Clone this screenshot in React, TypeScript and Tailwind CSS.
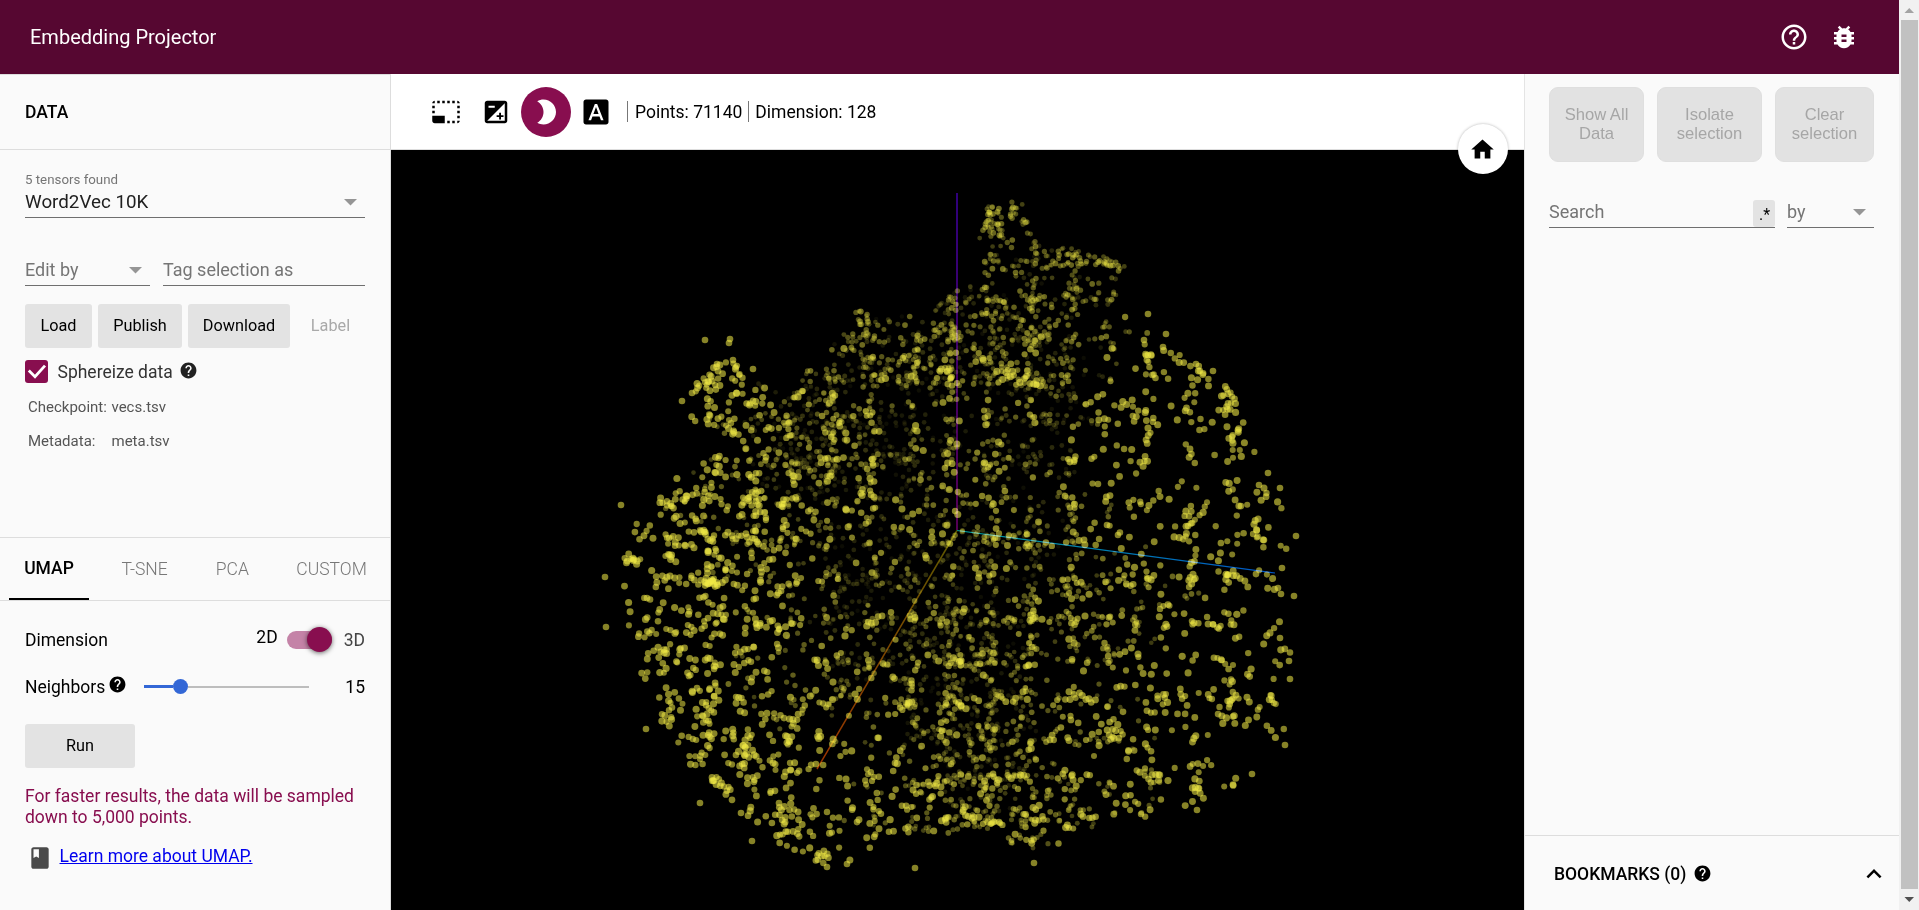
import React, { useMemo } from 'react';
import {
  MdBrightness2,
  MdBugReport,
  MdClass,
  MdExpandLess,
  MdExposure,
  MdFontDownload,
  MdHelp,
  MdHelpOutline,
  MdHome,
  MdPhotoSizeSelectSmall,
} from 'react-icons/md';

/* ---------- point cloud ---------- */

const CELL = 40;
const COLUMNS = 18;
const ORIGIN_X = 590;
const ORIGIN_Y = 180;

// Points per cell (base 36) for each depth layer, nearest layer first.
const NEAR = [
  '000000000000000000',
  '000000000000000000',
  '000000000000000000',
  '001200000000011000',
  '002c1013567315e600',
  '008m862253c54c6i30',
  '005cc6844440a94c70',
  '02ce8a924532385542',
  '0amigc945456486ac2',
  '4cqie3422343468aa2',
  '0ciee643252686e6a3',
  '0eeec3433546668863',
  '0cic86353546586g34',
  '08gcie465646eei894',
  '01ceee865666346420',
  '001de87ccce59c5c00',
  '0002ei862353320000',
];
const MIDDLE = [
  '0000000003o2000000',
  '0000000012kga20000',
  '000000002akomb0000',
  '000000c8gkqlc30000',
  '000004pppfkk320000',
  '00004fa6a46a300000',
  '00058fc56663000000',
  '0028ca8886c6100000',
  '0066aa445aef500000',
  '000488448aa8840000',
  '00005686eeeeea6000',
  '00000888cicee80000',
  '000364c8ekg8500000',
  '00003325iki8330000',
  '00000003ekk8430000',
  '00000034ammia60000',
  '0000000084c5000000',
];
const FAR = [
  '000000000000000000',
  '000000000022000000',
  '000000000688400000',
  '000000068kka500000',
  '000000afkkkp200000',
  '00006pfka58p800000',
  '0000azuuk6ck000000',
  '0000akfka558000000',
  '0000008caaa8000000',
  '000004kgci85000000',
  '000000zfck80000000',
  '0000036cpk80000000',
  '000000a5ksf0000000',
  '00000000fpe0000000',
  '000000008ff0000000',
  '000000000680000000',
];

const OUTLINE: [number, number][] = [
  [680, 400], [690, 385], [708, 362], [738, 362], [752, 380], [768, 385], [785, 400], [800, 385],
  [808, 365], [830, 350], [845, 330], [845, 295], [858, 297], [878, 320], [920, 312], [945, 298],
  [965, 285], [975, 250], [982, 222], [985, 203], [1005, 203], [1012, 200], [1024, 201], [1034, 232],
  [1062, 245], [1090, 253], [1127, 262], [1120, 300], [1150, 330], [1175, 350], [1195, 365], [1215, 370],
  [1235, 395], [1250, 435], [1265, 470], [1282, 490], [1297, 540], [1290, 600], [1292, 670], [1288, 740],
  [1245, 760], [1230, 795], [1170, 815], [1120, 825], [1080, 840], [1040, 850], [1000, 842], [950, 835],
  [900, 845], [865, 860], [830, 866], [810, 860], [775, 842], [750, 820], [725, 795], [690, 765],
  [672, 740], [650, 700], [640, 680], [630, 650], [625, 600], [622, 545], [650, 505], [660, 480],
  [720, 455], [715, 435], [690, 420],
];

const OUTLIERS: [number, number][] = [
  [621, 505], [605, 577], [606, 627], [646, 729], [700, 803], [741, 813], [752, 841], [705, 340], [730, 339],
  [729, 343], [733, 360], [717, 364], [753, 369], [692, 393], [682, 401], [1148, 314], [1144, 340], [1166, 334],
  [1163, 347], [1148, 355], [1213, 371], [1196, 364], [1268, 473], [1280, 488], [1259, 485], [1296, 536],
  [1282, 568], [1294, 596], [1278, 588], [1281, 594], [1252, 774], [1197, 810], [1290, 679], [1285, 745],
  [1289, 661], [1280, 638], [827, 867], [847, 864], [915, 868], [1034, 863], [1065, 496], [1107, 525],
];

function inOutline(x: number, y: number) {
  let inside = false;
  for (let i = 0, j = OUTLINE.length - 1; i < OUTLINE.length; j = i++) {
    const [xi, yi] = OUTLINE[i];
    const [xj, yj] = OUTLINE[j];
    if (yi > y !== yj > y && x < ((xj - xi) * (y - yi)) / (yj - yi) + xi) inside = !inside;
  }
  return inside;
}

type Dot = { x: number; y: number; r: number; o: number };
type Layer = { rows: string[]; scale: number; r: [number, number]; o: [number, number]; clump: number };

const LAYERS: Layer[] = [
  { rows: FAR, scale: 1.25, r: [2.2, 2.5], o: [0.05, 0.22], clump: 0.1 },
  { rows: MIDDLE, scale: 1.3, r: [2.3, 2.9], o: [0.24, 0.46], clump: 0.2 },
  { rows: NEAR, scale: 1.22, r: [3, 3.6], o: [0.53, 0.58], clump: 0.28 },
];

function buildCloud(): Dot[] {
  let seed = 90411;
  const rnd = () => {
    seed = (seed * 1664525 + 1013904223) % 4294967296;
    return seed / 4294967296;
  };
  const dots: Dot[] = [];
  LAYERS.forEach(({ rows, scale, r, o, clump }) => {
    rows.forEach((row, ry) => {
      for (let cx = 0; cx < COLUMNS; cx++) {
        const n = Math.round(parseInt(row[cx], 36) * scale);
        let px = 0;
        let py = 0;
        for (let k = 0; k < n; k++) {
          let x = 0;
          let y = 0;
          let ok = false;
          for (let t = 0; t < 12 && !ok; t++) {
            if (k > 0 && rnd() < clump) {
              const a = rnd() * Math.PI * 2;
              const d = 3 + rnd() * 5;
              x = px + Math.cos(a) * d;
              y = py + Math.sin(a) * d;
            } else {
              x = ORIGIN_X + (cx - 0.15 + rnd() * 1.3) * CELL;
              y = ORIGIN_Y + (ry - 0.15 + rnd() * 1.3) * CELL;
            }
            ok = inOutline(x, y);
          }
          if (!ok) continue;
          px = x;
          py = y;
          const z = rnd();
          dots.push({ x, y, r: r[0] + (r[1] - r[0]) * z, o: o[0] + (o[1] - o[0]) * z });
        }
      }
    });
  });
  OUTLIERS.forEach(([x, y]) => dots.push({ x, y, r: 3.3, o: 0.56 }));
  return dots;
}

function Cloud() {
  const dots = useMemo(buildCloud, []);
  return (
    <svg className="block h-full w-full bg-black" viewBox="391 150 1133 760">
      <defs>
        <linearGradient id="axis-up" gradientUnits="userSpaceOnUse" x1="957" y1="193" x2="957" y2="530">
          <stop offset="0" stopColor="#2f007c" />
          <stop offset="1" stopColor="#540054" />
        </linearGradient>
        <linearGradient id="axis-right" gradientUnits="userSpaceOnUse" x1="957" y1="530" x2="1275" y2="573">
          <stop offset="0" stopColor="#00a09c" />
          <stop offset="1" stopColor="#0056c8" />
        </linearGradient>
        <linearGradient id="axis-down" gradientUnits="userSpaceOnUse" x1="957" y1="530" x2="817" y2="769">
          <stop offset="0" stopColor="#5c5a00" />
          <stop offset="1" stopColor="#9c3400" />
        </linearGradient>
      </defs>
      <g fill="#f0e945">
        {dots.map((d, i) => (
          <circle key={i} cx={d.x.toFixed(1)} cy={d.y.toFixed(1)} r={d.r.toFixed(2)} fillOpacity={d.o.toFixed(2)} />
        ))}
      </g>
      <g className="mix-blend-screen">
        <path d="M956 193h2v337h-2z" fill="url(#axis-up)" />
        <line x1="957" y1="530.5" x2="1275" y2="573" stroke="url(#axis-right)" strokeWidth="1.2" />
        <line x1="957" y1="530.5" x2="817" y2="769" stroke="url(#axis-down)" strokeWidth="1.5" />
      </g>
    </svg>
  );
}

/* ---------- small parts ---------- */

function Caret() {
  return (
    <svg className="mr-[8.5px] mb-[2px] block h-[7px] w-[13px]" viewBox="0 0 13 7">
      <path d="M0 0h13L6.5 6.6z" fill="#959595" />
    </svg>
  );
}

function GreyButton({ className, children }: { className: string; children: React.ReactNode }) {
  return (
    <button className={`h-[44px] rounded-[3px] bg-[#e3e3e3] text-[16.25px] text-black ${className}`}>
      {children}
    </button>
  );
}

function PanelButton({ className, children }: { className: string; children: React.ReactNode }) {
  return (
    <button
      className={`h-[75px] rounded-[9px] border border-[#dfdfdf] bg-[#e2e2e2] pb-[2px] font-['Liberation_Sans',Arial,sans-serif] text-[16.6px] leading-[19px] text-[#a6a6a6] ${className}`}
    >
      {children}
    </button>
  );
}

function DataPanel() {
  return (
    <section className="flex h-[388px] flex-col border-b border-[#dddddd] pr-[25px] pl-[25px]">
      <div className="mt-[21px] h-[17px] text-[13.3px] leading-[17px] text-[#757575]">5 tensors found</div>
      <div className="mt-[2px] flex h-[28px] items-center justify-between border-b border-[#6f6f6f] text-[18.8px] leading-[20px] text-[#212121]">
        <span className="pb-[4px]">Word2Vec 10K</span>
        <Caret />
      </div>
      <div className="mt-[40px] flex gap-[13px] text-[18px] leading-[20px] text-[#757575]">
        <div className="flex h-[28px] w-[125px] items-center justify-between border-b border-[#6f6f6f]">
          <span className="pb-[3px]">Edit by</span>
          <Caret />
        </div>
        <div className="flex h-[28px] w-[202px] items-center border-b border-[#6f6f6f]">
          <span className="pb-[3px]">Tag selection as</span>
        </div>
      </div>
      <div className="mt-[18px] flex gap-[6px]">
        <GreyButton className="w-[67px]">Load</GreyButton>
        <GreyButton className="w-[84px]">Publish</GreyButton>
        <GreyButton className="w-[102px]">Download</GreyButton>
        <button className="h-[44px] w-[69px] text-[16.25px] text-[#a9a9a9]">Label</button>
      </div>
      <div className="mt-[12px] flex h-[23px] items-center">
        <span className="flex h-[23px] w-[23px] items-center justify-center rounded-[3px] bg-[#880e4f]">
          <svg className="h-[23px] w-[23px]" viewBox="0 0 23 23">
            <path d="M3.8 10.6l6.2 6.2L20 5.6" fill="none" stroke="#fff" strokeWidth="2.8" />
          </svg>
        </span>
        <span className="ml-[9.5px] pt-[2px] text-[17.5px] leading-[23px] text-[#333333]">Sphereize data</span>
        <MdHelp className="mb-[3px] ml-[6px] h-[19px] w-[19px] text-[#212121]" />
      </div>
      <div className="mt-[14px] ml-[3px] text-[15px] text-[#555555]">
        <div className="flex h-[20px] items-center">
          <span className="w-[83.5px]">Checkpoint:</span>vecs.tsv
        </div>
        <div className="mt-[14px] flex h-[20px] items-center">
          <span className="w-[83.5px]">Metadata:</span>meta.tsv
        </div>
      </div>
    </section>
  );
}

function ProjectionPanel() {
  return (
    <section className="flex flex-col">
      <div className="flex h-[63px] border-b border-[#dddddd] text-[17.5px] font-light text-[#777777]">
        <span className="ml-[9px] flex w-[80px] items-center justify-center border-b-[2px] border-black pt-[1px] font-medium text-black">
          UMAP
        </span>
        <span className="ml-[32.5px] flex items-center">T-SNE</span>
        <span className="ml-[48px] flex items-center">PCA</span>
        <span className="ml-[47.5px] flex items-center">CUSTOM</span>
      </div>
      <div className="px-[25px] text-[17.5px] text-black">
        <div className="mt-[26px] flex h-[25px] items-center">
          <span className="flex-1 pt-[2px]">Dimension</span>
          <span className="mb-[5px]">2D</span>
          <span className="ml-[9px] flex h-[18px] w-[45px] items-center justify-end rounded-full bg-[#c483a7]">
            <span className="h-[25px] w-[25px] shrink-0 rounded-full bg-[#880e4f] shadow-[0_1px_5px_rgba(0,0,0,0.6)]" />
          </span>
          <span className="ml-[12px] pt-[2px] text-[#444444]">3D</span>
        </div>
        <div className="mt-[22px] flex h-[25px] items-center">
          <span className="w-[82.5px] pt-[2px]">Neighbors</span>
          <MdHelp className="mb-[4px] h-[19px] w-[19px]" />
          <span className="ml-[17.5px] flex w-[165px] items-center">
            <span className="h-[3px] w-[29px] bg-[#3367d6]" />
            <span className="h-[15px] w-[15px] rounded-full bg-[#3367d6]" />
            <span className="h-[2px] flex-1 bg-[#bdbdbd]" />
          </span>
          <span className="flex-1 pt-[2px] text-right">15</span>
        </div>
        <GreyButton className="mt-[25px] block w-[110px]">Run</GreyButton>
        <p className="mt-[18px] leading-[21px] whitespace-nowrap text-[#880e4f]">
          For faster results, the data will be sampled
          <br />
          down to 5,000 points.
        </p>
        <div className="mt-[15px] flex h-[27px] items-center">
          <MdClass className="mt-[2px] ml-[2px] h-[26px] w-[26px] text-[#4a4a4a]" />
          <a className="ml-[6.5px] text-[#0000ee] underline" href="#umap">
            Learn more about UMAP.
          </a>
        </div>
      </div>
    </section>
  );
}

function LeftPanel() {
  return (
    <aside className="h-full w-[391px] border-t border-r border-[#dddddd] bg-[#fafafa]">
      <div className="flex h-[75px] items-center border-b border-[#dddddd] pl-[25px] text-[17.5px] font-medium text-black">
        DATA
      </div>
      <DataPanel />
      <ProjectionPanel />
    </aside>
  );
}

function Stage() {
  return (
    <main className="relative flex h-full w-[1133px] flex-col">
      <div className="flex h-[76px] items-center border-b border-[#dddddd] bg-white pl-[40px] text-[17.5px] text-black">
        <MdPhotoSizeSelectSmall className="h-[30px] w-[30px]" />
        <MdExposure className="ml-[20px] h-[30px] w-[30px]" />
        <span className="ml-[10px] flex h-[50px] w-[50px] items-center justify-center rounded-full bg-[#880e4f] text-white">
          <MdBrightness2 className="h-[30px] w-[30px]" />
        </span>
        <MdFontDownload className="ml-[10px] h-[30px] w-[30px]" />
        <span className="ml-[16px] h-[21px] w-px bg-[#777777]" />
        <span className="ml-[7px] pt-[1px]">Points: 71140</span>
        <span className="ml-[5.5px] h-[21px] w-px bg-[#777777]" />
        <span className="ml-[6.5px] pt-[1px]">Dimension: 128</span>
      </div>
      <div className="min-h-0 flex-1">
        <Cloud />
      </div>
      <button className="absolute top-[50px] right-[16px] flex h-[50px] w-[50px] items-center justify-center rounded-full bg-white pr-[1px] text-black shadow-[0_0_3px_rgba(0,0,0,0.3)]">
        <MdHome className="h-[27px] w-[27px]" />
      </button>
    </main>
  );
}

function RightPanel() {
  return (
    <aside className="flex h-full w-[375px] flex-col border-l border-[#e4e4e4] bg-[#fafafa]">
      <div className="mt-[13px] ml-[24px] flex gap-[13px]">
        <PanelButton className="w-[95px]">
          Show All
          <br />
          Data
        </PanelButton>
        <PanelButton className="w-[105px]">
          Isolate
          <br />
          selection
        </PanelButton>
        <PanelButton className="w-[99px]">
          Clear
          <br />
          selection
        </PanelButton>
      </div>
      <div className="mt-[38px] ml-[24px] flex gap-[12px] text-[18px] leading-[20px] text-[#757575]">
        <div className="flex h-[28px] w-[226px] items-center justify-between border-b border-[#6f6f6f]">
          <span className="pb-[3px]">Search</span>
          <span className="flex h-[27px] w-[22px] items-center justify-center rounded-[3px] bg-[#e3e3e3] pt-[2px] pl-[1px] text-[16px] text-black">
            .*
          </span>
        </div>
        <div className="flex h-[28px] w-[87px] items-center justify-between border-b border-[#6f6f6f]">
          <span className="pb-[3px]">by</span>
          <Caret />
        </div>
      </div>
      <div className="mt-auto flex h-[75px] items-center border-t border-[#dddddd] pl-[29px] text-[17.5px] font-medium text-black">
        <span className="pt-[2px]">BOOKMARKS (0)</span>
        <MdHelp className="ml-[7px] h-[19px] w-[19px]" />
        <MdExpandLess className="mt-[2px] mr-[10px] ml-auto h-[30px] w-[30px]" />
      </div>
    </aside>
  );
}

function Scrollbar() {
  return (
    <div className="flex h-full w-[20px] flex-col items-center bg-[#f1f1f1]">
      <svg className="h-[20px] w-[20px] shrink-0" viewBox="0 0 20 20">
        <path d="M5.5 13h9.5l-4.75-5z" fill="#a3a3a3" />
      </svg>
      <div className="ml-[1px] w-[17px] flex-1 bg-[#c1c1c1]" />
      <svg className="h-[21px] w-[20px] shrink-0" viewBox="0 0 20 21">
        <path d="M5.5 8h9.5l-4.75 5z" fill="#505050" />
      </svg>
    </div>
  );
}

export default function App() {
  return (
    <div className="flex h-[910px] w-[1919px] overflow-hidden bg-white font-[Roboto,'Liberation_Sans',sans-serif]">
      <div className="flex w-[1899px] flex-col">
        <header className="flex h-[74px] items-center bg-[#560731] pr-[40px] pl-[30px] text-white">
          <h1 className="flex-1 text-[20px]">Embedding Projector</h1>
          <MdHelpOutline className="h-[30px] w-[30px]" />
          <MdBugReport className="ml-[20px] h-[30px] w-[30px]" />
        </header>
        <div className="flex min-h-0 flex-1">
          <LeftPanel />
          <Stage />
          <RightPanel />
        </div>
      </div>
      <Scrollbar />
    </div>
  );
}
